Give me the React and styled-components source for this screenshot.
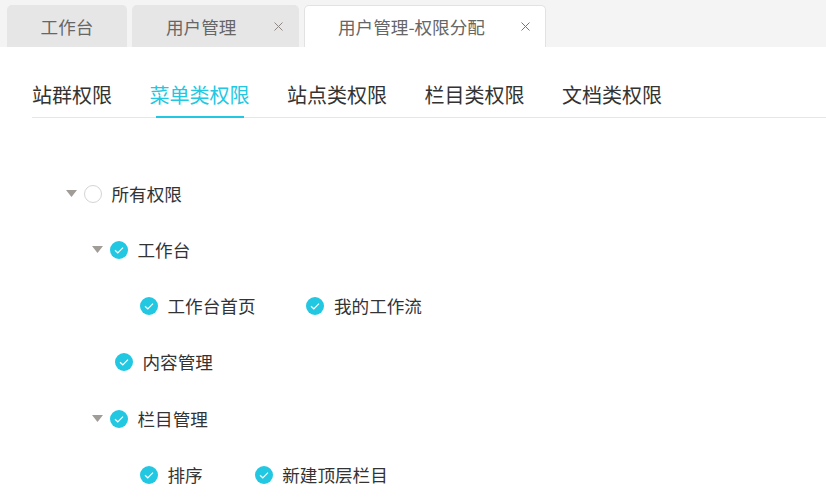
import React from 'react';
import styled, { createGlobalStyle } from 'styled-components';

const tabs = [
  { label: '工作台', width: 120 },
  { label: '用户管理', width: 167, closable: true },
  { label: '用户管理-权限分配', width: 242, closable: true, active: true },
];

const sections = ['站群权限', '菜单类权限', '站点类权限', '栏目类权限', '文档类权限'];

const Check = ({ checked }) => (
  <CheckCircle $checked={checked}>
    {checked && (
      <svg width="18" height="18" viewBox="0 0 18 18">
        <path d="M5 9.2l2.8 2.6L13 6.6" fill="none" stroke="#fff" strokeWidth="1.2" />
      </svg>
    )}
  </CheckCircle>
);

const Arrow = () => (
  <svg width="11" height="7" viewBox="0 0 11 7">
    <path d="M0 0h11L5.5 7z" fill="#a09c98" />
  </svg>
);

const Node = ({ label, checked = true, gap }) => (
  <NodeItem $gap={gap}>
    <Check checked={checked} />
    <NodeLabel>{label}</NodeLabel>
  </NodeItem>
);

const App = () => (
  <Page>
    <GlobalStyle />
    <TabBar>
      {tabs.map((tab) => (
        <Tab key={tab.label} $width={tab.width} $active={tab.active} $closable={tab.closable}>
          <TabLabel $closable={tab.closable}>{tab.label}</TabLabel>
          {tab.closable && (
            <TabClose $active={tab.active}>
              <svg width="9" height="9" viewBox="0 0 9 9">
                <path d="M.5.5l8 8M8.5.5l-8 8" stroke="currentColor" strokeWidth="1" fill="none" />
              </svg>
            </TabClose>
          )}
        </Tab>
      ))}
    </TabBar>
    <SectionNav>
      {sections.map((section, i) => (
        <SectionLink key={section} $active={i === 1}>{section}</SectionLink>
      ))}
    </SectionNav>
    <Tree>
      <Row $indent={66}>
        <ArrowSlot><Arrow /></ArrowSlot>
        <Node label="所有权限" checked={false} />
      </Row>
      <Row $indent={92}>
        <ArrowSlot><Arrow /></ArrowSlot>
        <Node label="工作台" />
      </Row>
      <Row $indent={140}>
        <Node label="工作台首页" gap={51} />
        <Node label="我的工作流" />
      </Row>
      <Row $indent={115}>
        <Node label="内容管理" />
      </Row>
      <Row $indent={92}>
        <ArrowSlot><Arrow /></ArrowSlot>
        <Node label="栏目管理" />
      </Row>
      <Row $indent={140}>
        <Node label="排序" gap={52} />
        <Node label="新建顶层栏目" />
      </Row>
    </Tree>
  </Page>
);

export default App;

// Styles

const GlobalStyle = createGlobalStyle`
  html, body {
    margin: 0;
    height: 100%;
    overflow: hidden;
    background: #fff;
  }
  body {
    font-family: "Noto Sans CJK SC", "Liberation Sans", sans-serif;
  }
`;

const Page = styled.div`
  width: 826px;
  height: 502px;
  overflow: hidden;
`;

const TabBar = styled.div`
  display: flex;
  align-items: flex-end;
  gap: 5px;
  height: 47px;
  padding-left: 7px;
  background: #f4f4f4;
`;

const Tab = styled.div`
  box-sizing: border-box;
  display: flex;
  align-items: center;
  width: ${(p) => p.$width}px;
  height: 42px;
  padding-left: ${(p) => (p.$closable ? 33 : 0)}px;
  justify-content: ${(p) => (p.$closable ? 'flex-start' : 'center')};
  border: 1px solid ${(p) => (p.$active ? '#e2e2e2' : '#e6e6e6')};
  border-bottom: 0;
  border-radius: 5px 5px 0 0;
  background: ${(p) => (p.$active ? '#fff' : '#e6e6e6')};
`;

const TabLabel = styled.span`
  flex: ${(p) => (p.$closable ? 1 : 'none')};
  font-size: 17.6px;
  line-height: 42px;
  color: #666;
  white-space: nowrap;
`;

const TabClose = styled.span`
  display: flex;
  width: 9px;
  margin-right: 15px;
  color: ${(p) => (p.$active ? '#5f7c8c' : '#8f8781')};
`;

const SectionNav = styled.div`
  display: flex;
  gap: 37.5px;
  height: 71px;
  margin-left: 32px;
  border-bottom: 1px solid #e6e6e6;
  box-sizing: border-box;
  align-items: flex-end;
`;

const SectionLink = styled.div`
  position: relative;
  height: 44px;
  font-size: 20px;
  line-height: 44px;
  white-space: nowrap;
  color: ${(p) => (p.$active ? '#22c7e2' : '#333')};

  ${(p) => p.$active && `
    &::after {
      content: "";
      position: absolute;
      left: 6px;
      right: 6px;
      bottom: -1px;
      height: 2px;
      background: #22c7e2;
    }
  `}
`;

const Tree = styled.div`
  display: flex;
  flex-direction: column;
  padding-top: 47.5px;
`;

const Row = styled.div`
  display: flex;
  align-items: center;
  height: 56.25px;
  padding-left: ${(p) => p.$indent}px;
`;

const ArrowSlot = styled.span`
  display: flex;
  width: 18px;
  flex: none;
`;

const NodeItem = styled.div`
  display: flex;
  align-items: center;
  margin-right: ${(p) => p.$gap || 0}px;
`;

const CheckCircle = styled.span`
  box-sizing: border-box;
  display: flex;
  width: 18px;
  height: 18px;
  flex: none;
  border-radius: 50%;
  border: ${(p) => (p.$checked ? '0' : '1px solid #d4d4d4')};
  background: ${(p) => (p.$checked ? '#22c7e2' : '#fff')};
`;

const NodeLabel = styled.span`
  margin-left: 9.5px;
  font-size: 17.6px;
  line-height: 26px;
  color: #333;
  white-space: nowrap;
`;
